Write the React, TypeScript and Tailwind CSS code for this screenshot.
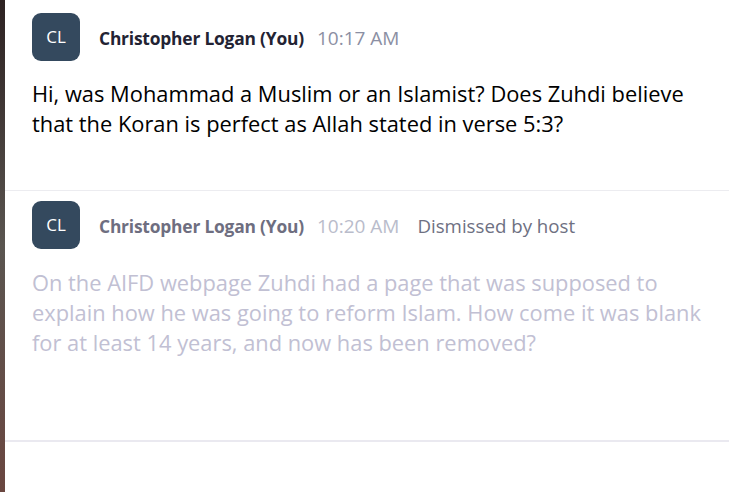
import React from "react";

function Avatar() {
  return (
    <div className="w-[48px] h-[48px] shrink-0 rounded-[9px] bg-[#34495e] flex items-center justify-center text-white text-[17px]">
      CL
    </div>
  );
}

export default function App() {
  return (
    <div
      className="w-[729px] h-[492px] flex bg-white overflow-hidden"
      style={{ fontFamily: '"Open Sans", "Noto Sans", sans-serif' }}
    >
      <div className="w-[5px] shrink-0 bg-gradient-to-b from-[#2d2222] via-[#5a5550] to-[#6a4640]" />
      <div className="flex-1 flex flex-col">
        <div className="pt-[13px] pl-[27px] pr-4 h-[191px] border-b border-[#ececf0]">
          <div className="flex items-center h-[48px]">
            <Avatar />
            <span className="ml-[19px] pt-[3px] text-[17.4px] font-bold text-[#232333] tracking-[-0.2px]">
              Christopher Logan (You)
            </span>
            <span className="ml-[13px] pt-[3px] text-[19px] text-[#8b8fa3]">10:17 AM</span>
          </div>
          <p className="mt-[18px] text-[21.85px] leading-[30px] text-black whitespace-nowrap">
            Hi, was Mohammad a Muslim or an Islamist? Does Zuhdi believe
            <br />
            that the Koran is perfect as Allah stated in verse 5:3?
          </p>
        </div>
        <div className="pt-[10px] pl-[27px] pr-4 h-[251px] border-b-2 border-[#eae9f0]">
          <div className="flex items-center h-[48px]">
            <Avatar />
            <span className="ml-[19px] pt-[3px] text-[17.4px] font-bold text-[#6e6e80] tracking-[-0.2px]">
              Christopher Logan (You)
            </span>
            <span className="ml-[13px] pt-[3px] text-[19px] text-[#b9bccb]">10:20 AM</span>
            <span className="ml-[18px] pt-[3px] text-[18.7px] text-[#6e7082]">Dismissed by host</span>
          </div>
          <p className="mt-[19px] text-[21.85px] leading-[30px] text-[#c1c0d3] whitespace-nowrap">
            On the AIFD webpage Zuhdi had a page that was supposed to
            <br />
            explain how he was going to reform Islam. How come it was blank
            <br />
            for at least 14 years, and now has been removed?
          </p>
        </div>
      </div>
    </div>
  );
}
